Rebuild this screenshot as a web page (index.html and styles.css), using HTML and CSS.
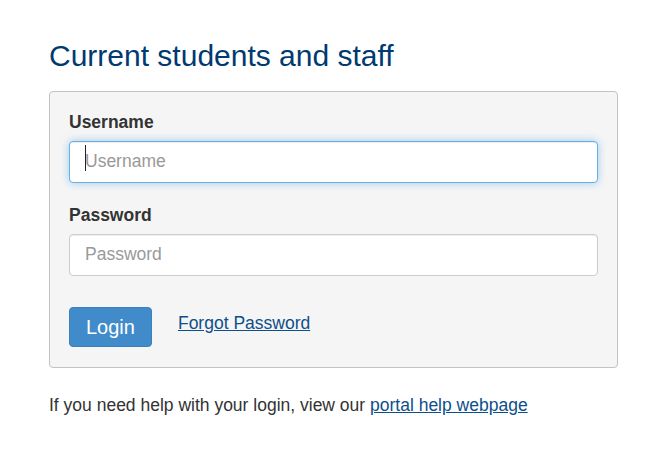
FILE: index.html
```html
<!DOCTYPE html>
<html lang="en">
<head>
<meta charset="utf-8">
<title>Login</title>
<link rel="stylesheet" href="styles.css">
</head>
<body>
<main class="page">
  <h1 class="title">Current students and staff</h1>
  <form class="panel">
    <label class="label" for="user">Username</label>
    <div class="field">
      <input class="input input-focus" id="user" type="text" placeholder="Username">
      <span class="caret"></span>
    </div>
    <label class="label label-gap" for="pass">Password</label>
    <div class="field">
      <input class="input" id="pass" type="password" placeholder="Password">
    </div>
    <div class="actions">
      <button class="btn" type="button">Login</button>
      <a class="link forgot" href="#">Forgot Password</a>
    </div>
  </form>
  <p class="help">If you need help with your login, view our <a class="link" href="#">portal help webpage</a></p>
</main>
</body>
</html>
```
FILE: styles.css
```css
html, body {
  margin: 0;
  padding: 0;
  background: #ffffff;
}
body {
  font-family: "Liberation Sans", Arial, sans-serif;
  font-size: 17.5px;
  color: #333333;
}
.page {
  padding: 39px 0 0 49px;
  width: 569px;
}
.title {
  margin: 0 0 19px;
  font-size: 30px;
  font-weight: normal;
  line-height: 33px;
  color: #003a70;
}
.panel {
  display: flex;
  flex-direction: column;
  background: #f5f5f5;
  border: 1px solid #c3c3c3;
  border-radius: 4px;
  padding: 18px 19px 20px;
}
.label {
  display: block;
  font-weight: bold;
  line-height: 25px;
  margin-bottom: 6px;
  color: #333333;
}
.label-gap {
  margin-top: 20px;
}
.field {
  position: relative;
}
.input {
  display: block;
  box-sizing: border-box;
  width: 100%;
  height: 42px;
  padding: 0 15px 2px;
  font-family: inherit;
  font-size: 17.5px;
  color: #555555;
  background: #ffffff;
  border: 1px solid #cccccc;
  border-radius: 4px;
  box-shadow: inset 0 1px 1px rgba(0,0,0,0.075);
  outline: none;
}
.input::placeholder {
  color: #999999;
}
.input-focus {
  border-color: #66afe9;
  box-shadow: inset 0 1px 1px rgba(0,0,0,0.075), 0 0 8px rgba(102,175,233,0.6);
}
.caret {
  position: absolute;
  left: 16px;
  top: 4px;
  width: 1px;
  height: 26px;
  background: #222222;
}
.actions {
  display: flex;
  align-items: flex-start;
  margin-top: 31px;
}
.btn {
  box-sizing: border-box;
  height: 40px;
  padding: 7px 16px;
  font-family: inherit;
  font-size: 20px;
  line-height: 24px;
  color: #ffffff;
  background: #428bca;
  border: 1px solid #3a80bd;
  border-radius: 4px;
}
.link {
  color: #0d4f8b;
  text-decoration: underline;
}
.forgot {
  margin-left: 26px;
  padding-top: 4px;
  line-height: 25px;
}
.help {
  margin: 25px 0 0;
  line-height: 25px;
  color: #333333;
}
```
